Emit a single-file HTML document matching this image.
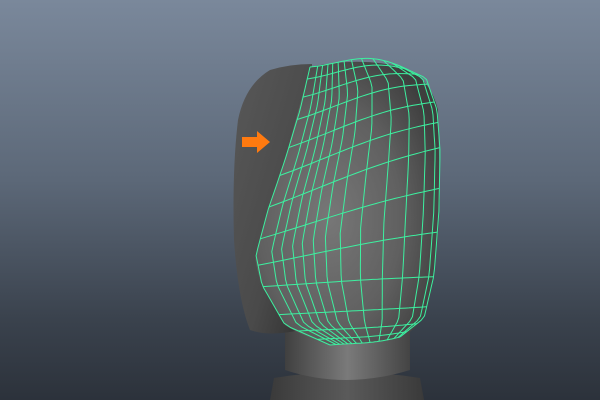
<!DOCTYPE html>
<html><head><meta charset="utf-8"><style>
html,body{margin:0;padding:0;width:600px;height:400px;overflow:hidden}
body{background:linear-gradient(#7a889b 0%,#5c6878 45%,#3a424d 80%,#2c323b 100%)}
svg{position:absolute;left:0;top:0;display:block}
</style></head><body>
<svg width="600" height="400" viewBox="0 0 600 400">
<defs>
<linearGradient id="neck" x1="0" x2="1"><stop offset="0" stop-color="#404040"/><stop offset="0.5" stop-color="#7a7a7a"/><stop offset="1" stop-color="#444"/></linearGradient>
<linearGradient id="sh" x1="0" x2="1"><stop offset="0" stop-color="#3a3a3a"/><stop offset="0.5" stop-color="#5a5a5a"/><stop offset="1" stop-color="#3a3a3a"/></linearGradient>
<linearGradient id="back" x1="0" x2="1" y1="0" y2="1"><stop offset="0" stop-color="#585858"/><stop offset="0.6" stop-color="#4a4a4a"/><stop offset="1" stop-color="#2e2e2e"/></linearGradient>
<radialGradient id="face" cx="0.4" cy="0.55" r="0.65"><stop offset="0" stop-color="#777"/><stop offset="0.6" stop-color="#606060"/><stop offset="1" stop-color="#3e3e3e"/></radialGradient>
</defs>
<path d="M270,400 L274,378 Q345,366 420,378 L424,400 Z" fill="url(#sh)"/>
<path d="M285,330 L285,370 Q345,390 410,370 L410,330 Z" fill="url(#neck)"/>
<path d="M270,70 Q290,64 312,64 L300,330 Q270,337 250,330 Q238,300 234,240 Q232,170 238,120 Q245,85 270,70 Z" fill="url(#back)"/>
<path d="M310,67 Q360,56 405,68 Q430,78 438,110 L440,200 Q437,270 428,305 Q420,330 400,337 Q360,345 330,345 Q300,335 285,325 L262,285 Q254,262 256,255 L268,210 L285,160 Z" fill="url(#face)"/>
<path d="M242,137 H257 V131 L270,142 L257,153 V147 H242 Z" fill="#ff7a10"/>
<g id="wire" fill="none" stroke="#3df0a0" stroke-width="1"></g>
</svg>
<script>
var L=[[310,67],[300,110],[285,160],[268,210],[256,255],[262,285],[285,325],[330,345]];
var R=[[400,66],[426,78],[437,110],[440,150],[439,210],[434,275],[424,318],[400,337]];
function at(a,t){var n=a.length-1,f=t*n,i=Math.min(Math.floor(f),n-1),r=f-i;return [a[i][0]+(a[i+1][0]-a[i][0])*r,a[i][1]+(a[i+1][1]-a[i][1])*r];}
function P(u,t){var l=at(L,t),r=at(R,t);var uu=Math.pow(u,0.7);return [l[0]+(r[0]-l[0])*uu,l[1]+(r[1]-l[1])*uu+Math.sin(u*Math.PI)*(-8+10*t)];}
var g=document.getElementById('wire'),s='';
var us=[0,0.03,0.06,0.1,0.14,0.19,0.25,0.33,0.45,0.6,0.75,0.88,0.96,1];
var ts=[0,0.04,0.1,0.17,0.25,0.33,0.42,0.52,0.62,0.72,0.82,0.9,0.96,1];
us.forEach(function(u){var d='M';for(var k=0;k<=40;k++){var p=P(u,k/40);d+=p[0].toFixed(1)+','+p[1].toFixed(1)+' ';}s+='<path d="'+d+'"/>';});
ts.forEach(function(t){var d='M';for(var k=0;k<=30;k++){var p=P(k/30,t);d+=p[0].toFixed(1)+','+p[1].toFixed(1)+' ';}s+='<path d="'+d+'"/>';});
g.innerHTML=s;
</script>
</body></html>
